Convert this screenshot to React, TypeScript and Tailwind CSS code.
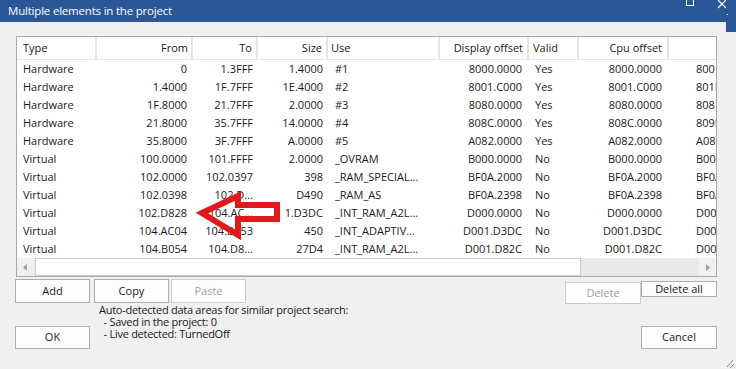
import React from "react";

const cols = [80, 96, 65, 70, 112, 89, 50, 90, 47];

type Row = [string, string, string, string, string, string, string, string, string];

const rows: Row[] = [
  ["Hardware", "0", "1.3FFF", "1.4000", "#1", "8000.0000", "Yes", "8000.0000", "8001.3FFF"],
  ["Hardware", "1.4000", "1F.7FFF", "1E.4000", "#2", "8001.C000", "Yes", "8001.C000", "801F.7FFF"],
  ["Hardware", "1F.8000", "21.7FFF", "2.0000", "#3", "8080.0000", "Yes", "8080.0000", "8081.FFFF"],
  ["Hardware", "21.8000", "35.7FFF", "14.0000", "#4", "808C.0000", "Yes", "808C.0000", "809F.FFFF"],
  ["Hardware", "35.8000", "3F.7FFF", "A.0000", "#5", "A082.0000", "Yes", "A082.0000", "A089.FFFF"],
  ["Virtual", "100.0000", "101.FFFF", "2.0000", "_OVRAM", "B000.0000", "No", "B000.0000", "B001.FFFF"],
  ["Virtual", "102.0000", "102.0397", "398", "_RAM_SPECIAL...", "BF0A.2000", "No", "BF0A.2000", "BF0A.2397"],
  ["Virtual", "102.0398", "102.D...", "D490", "_RAM_AS", "BF0A.2398", "No", "BF0A.2398", "BF0A.F827"],
  ["Virtual", "102.D828", "104.AC...", "1.D3DC", "_INT_RAM_A2L...", "D000.0000", "No", "D000.0000", "D001.D3DB"],
  ["Virtual", "104.AC04", "104.B053", "450", "_INT_ADAPTIV...", "D001.D3DC", "No", "D001.D3DC", "D001.D82B"],
  ["Virtual", "104.B054", "104.D8...", "27D4", "_INT_RAM_A2L...", "D001.D82C", "No", "D001.D82C", "D001.FFFF"],
];

const cellCls = [
  "pl-[6px] text-left",
  "pr-[6px] text-right",
  "pr-[5px] text-right",
  "pr-[5px] text-right",
  "pl-[7px] text-left",
  "pr-[7px] text-right",
  "pl-[6px] text-left",
  "pr-[7px] text-right",
  "pl-[27px] text-left",
];

const headCls = [
  "pl-[6px] justify-start",
  "pr-[3px] justify-end",
  "pr-[4px] justify-end",
  "pr-[4px] justify-end",
  "pl-[3px] justify-start",
  "pr-[4px] justify-end",
  "pl-[4px] justify-start",
  "pr-[5px] justify-end",
  "pl-[4px] justify-start",
];

const headers = ["Type", "From", "To", "Size", "Use", "Display offset", "Valid", "Cpu offset", ""];

function Btn({
  children,
  className = "",
  disabled = false,
}: {
  children: React.ReactNode;
  className?: string;
  disabled?: boolean;
}) {
  return (
    <div
      className={
        "flex items-center justify-center border bg-[#fdfdfd] " +
        (disabled ? "border-[#cccccc] text-[#a0a0a0] " : "border-[#adadad] text-[#1a1a1a] ") +
        className
      }
    >
      {children}
    </div>
  );
}

export default function App() {
  return (
    <div className="relative w-[736px] h-[369px] overflow-hidden bg-[#f0f0f0] font-['Open_Sans',sans-serif] text-[11px] text-[#1a1a1a]">
      {/* Title bar */}
      <div className="h-[22px] bg-[#2b579a] text-white text-[11.5px] tracking-[-0.2px] pl-[8px] flex items-center">
        Multiple elements in the project
      </div>
      {/* window controls (clipped) */}
      <div className="absolute left-[686px] top-[-3px] w-[8px] h-[9px] border border-white" />
      <svg className="absolute left-[717px] top-[0px]" width="10" height="9" viewBox="0 0 10 9">
        <path d="M1 0 L9 8 M9 0 L1 8" stroke="white" strokeWidth="1.2" fill="none" />
      </svg>
      <div className="absolute left-[726px] top-0 w-[10px] h-[32px] bg-[#2b579a]" />
      <div className="absolute left-[727px] top-[14px] w-[1px] h-[1px] bg-white" />

      <div className="pl-[16px] pt-[14px]">
        {/* list view */}
        <div className="w-[701px] h-[241px] border border-[#a8a8a8] bg-white flex flex-col">
          <div className="h-[23px] flex border-b border-[#e5e5e5] shrink-0">
            {headers.map((h, i) => (
              <div
                key={i}
                style={{ width: cols[i] }}
                className={
                  "h-full flex items-center whitespace-nowrap overflow-hidden " +
                  (i < 8 ? "border-r-2 border-[#e5e5e5] " : "") +
                  headCls[i]
                }
              >
                {h}
              </div>
            ))}
          </div>
          <div className="flex-1 flex flex-col">
            {rows.map((r, ri) => (
              <div key={ri} className="h-[18px] flex items-center">
                {r.map((c, ci) => (
                  <div
                    key={ci}
                    style={{ width: cols[ci] }}
                    className={"whitespace-nowrap overflow-hidden leading-[18px] " + cellCls[ci]}
                  >
                    {c}
                  </div>
                ))}
              </div>
            ))}
          </div>
          {/* horizontal scrollbar */}
          <div className="h-[18px] flex bg-[#e8e8e8] shrink-0">
            <div className="w-[17px] h-full flex items-center justify-center bg-[#f0f0f0]">
              <svg width="5" height="7" viewBox="0 0 5 7">
                <path d="M4 0 L0 3.5 L4 7 Z" fill="#a0a0a0" />
              </svg>
            </div>
            <div className="w-[546px] h-full bg-white border border-[#cdcdcd] ml-[1px]" />
            <div className="flex-1" />
            <div className="w-[17px] h-full flex items-center justify-center bg-[#f0f0f0]">
              <svg width="5" height="7" viewBox="0 0 5 7">
                <path d="M1 0 L5 3.5 L1 7 Z" fill="#a0a0a0" />
              </svg>
            </div>
          </div>
        </div>
      </div>

      {/* buttons row 1 */}
      <div className="flex items-start pl-[15px] mt-[2px] h-[25px]">
        <Btn className="w-[75px] h-[24px]">Add</Btn>
        <Btn className="w-[75px] h-[24px] ml-[4px]">Copy</Btn>
        <Btn className="w-[75px] h-[24px] ml-[2px]" disabled>
          Paste
        </Btn>
        <div className="flex-1" />
        <Btn className="w-[76px] h-[22px] mt-[3px]" disabled>
          Delete
        </Btn>
        <Btn className="w-[76px] h-[16px] mt-[2px] mr-[19px] leading-none pb-[1px]">Delete all</Btn>
      </div>

      {/* row 2 */}
      <div className="flex items-start pl-[15px]">
        <Btn className="w-[75px] h-[23px] mt-[22px] border-[#0078d7]">OK</Btn>
        <div className="ml-[9px] leading-[12px] tracking-[-0.27px] text-[#1a1a1a]">
          <div>Auto-detected data areas for similar project search:</div>
          <div className="pl-[2px]">&nbsp;- Saved in the project: 0</div>
          <div className="pl-[2px]">&nbsp;- Live detected: TurnedOff</div>
        </div>
        <div className="flex-1" />
        <Btn className="w-[76px] h-[23px] mt-[22px] mr-[19px]">Cancel</Btn>
      </div>

      {/* resize grip */}
      <svg className="absolute left-[724px] top-[356px]" width="12" height="13" viewBox="0 0 12 13">
        <path d="M3 11 L9 4 M6 12 L10 8" stroke="#8a8a8a" strokeWidth="1" fill="none" />
      </svg>

      {/* red arrow overlay */}
      <svg className="absolute left-[186px] top-[186px]" width="100" height="60" viewBox="0 0 100 60">
        <path
          d="M16 27 L52 10 L52 19 L91 19 L91 33 L52 33 L52 49 Z"
          fill="none"
          stroke="#e3181d"
          strokeWidth="6"
          strokeLinejoin="miter"
        />
      </svg>
    </div>
  );
}
